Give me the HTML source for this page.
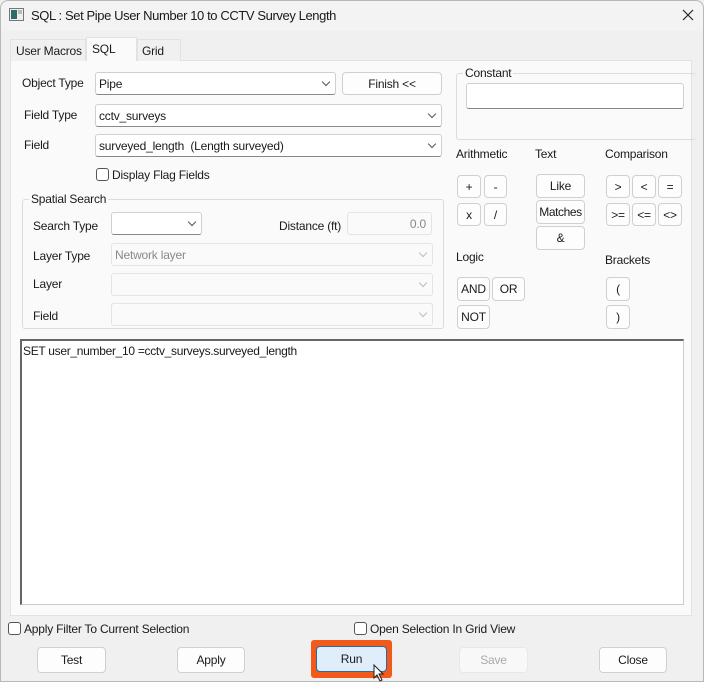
<!DOCTYPE html>
<html><head><meta charset="utf-8"><style>
*{box-sizing:border-box;margin:0;padding:0}
body{width:704px;height:682px;background:#f0f0f0;font-family:"Liberation Sans",sans-serif;font-size:12px;letter-spacing:-0.2px;color:#1a1a1a;position:relative;overflow:hidden;white-space:nowrap}
.a{position:absolute}
.win{left:0;top:0;width:704px;height:682px;border:1px solid #b8b8b8;border-radius:8px 8px 0 0;background:#f0f0f0}
.tb{left:1px;top:1px;width:702px;height:30px;background:#f3f3f3;border-radius:8px 8px 0 0}
.panel{left:10px;top:60px;width:682px;height:556px;background:#fafafa;border:1px solid #e2e2e2}
.tab{height:22px;border:1px solid #e2e2e2;border-bottom:none;background:#f0f0f0;padding:4px 5px;font-size:12px}
.lbl{font-size:12px}
.cb{background:#fff;border:1px solid #d0d0d0;border-bottom:1px solid #888;border-radius:3px;padding:4px 3px;font-size:12px}
.cb.dis{background:#fafafa;border:1px solid #e4e4e4;color:#888}
.chev{position:absolute;right:6px;top:6px;width:6px;height:6px;border-right:1px solid #555;border-bottom:1px solid #555;transform:rotate(45deg)}
.dis .chev{border-color:#bbb}
.btn{background:#fdfdfd;border:1px solid #d0d0d0;border-radius:4px;text-align:center;font-size:12px;display:flex;align-items:center;justify-content:center}
.grp{border:1px solid #dcdcdc;border-radius:3px}
.gt{background:#fafafa;padding:0 2px;font-size:12px}
.chk{width:13px;height:13px;border:1px solid #555;border-radius:3px;background:#fff}
</style></head><body>
<div class="a win"></div>
<div class="a tb"></div>
<svg class="a" style="left:9px;top:8px" width="15" height="13"><rect x="0.5" y="0.5" width="14" height="12" fill="#eee" stroke="#777"/><rect x="2" y="2" width="6" height="9" fill="#2e6b6b"/><rect x="9" y="2" width="4" height="4" fill="#bbb"/></svg>
<div class="a" style="left:31px;top:8px;font-size:13px;letter-spacing:-0.4px">SQL : Set Pipe User Number 10 to CCTV Survey Length</div>
<svg class="a" style="left:682px;top:9px" width="12" height="12"><path d="M1 1L11 11M11 1L1 11" stroke="#222" stroke-width="1.2"/></svg>

<div class="a panel"></div>
<div class="a tab" style="left:10px;top:39px;width:76px">User Macros</div>
<div class="a tab" style="left:137px;top:39px;width:44px;padding-left:4px">Grid</div>
<div class="a tab" style="left:86px;top:37px;width:51px;height:24px;background:#fafafa;padding-top:4px">SQL</div>

<div class="a lbl" style="left:22px;top:76px">Object Type</div>
<div class="a cb" style="left:95px;top:72px;width:241px;height:23px">Pipe<span class="chev"></span></div>
<div class="a btn" style="left:342px;top:72px;width:100px;height:23px">Finish &lt;&lt;</div>
<div class="a lbl" style="left:24px;top:108px">Field Type</div>
<div class="a cb" style="left:95px;top:104px;width:347px;height:23px">cctv_surveys<span class="chev"></span></div>
<div class="a lbl" style="left:24px;top:138px">Field</div>
<div class="a cb" style="left:95px;top:134px;width:347px;height:23px">surveyed_length&nbsp; (Length surveyed)<span class="chev"></span></div>
<div class="a chk" style="left:96px;top:168px"></div>
<div class="a lbl" style="left:112px;top:168px">Display Flag Fields</div>

<div class="a grp" style="left:22px;top:199px;width:422px;height:130px"></div>
<div class="a gt" style="left:29px;top:192px">Spatial Search</div>
<div class="a lbl" style="left:33px;top:219px">Search Type</div>
<div class="a cb" style="left:111px;top:212px;width:91px;height:23px"><span class="chev"></span></div>
<div class="a lbl" style="left:279px;top:219px">Distance (ft)</div>
<div class="a cb dis" style="left:347px;top:212px;width:85px;height:23px;text-align:right;padding-right:5px">0.0</div>
<div class="a lbl" style="left:33px;top:249px">Layer Type</div>
<div class="a cb dis" style="left:111px;top:243px;width:322px;height:23px">Network layer<span class="chev"></span></div>
<div class="a lbl" style="left:33px;top:277px">Layer</div>
<div class="a cb dis" style="left:111px;top:273px;width:322px;height:23px"><span class="chev"></span></div>
<div class="a lbl" style="left:33px;top:309px">Field</div>
<div class="a cb dis" style="left:111px;top:303px;width:322px;height:23px"><span class="chev"></span></div>

<div class="a grp" style="left:456px;top:73px;width:240px;height:67px;border-right:none"></div>
<div class="a gt" style="left:463px;top:66px">Constant</div>
<div class="a cb" style="left:466px;top:83px;width:218px;height:26px"></div>

<div class="a lbl" style="left:456px;top:147px">Arithmetic</div>
<div class="a lbl" style="left:535px;top:147px">Text</div>
<div class="a lbl" style="left:605px;top:147px">Comparison</div>
<div class="a btn" style="left:457px;top:175px;width:24px;height:23px">+</div>
<div class="a btn" style="left:484px;top:175px;width:23px;height:23px">-</div>
<div class="a btn" style="left:457px;top:203px;width:24px;height:23px">x</div>
<div class="a btn" style="left:484px;top:203px;width:23px;height:23px">/</div>
<div class="a btn" style="left:536px;top:174px;width:49px;height:24px">Like</div>
<div class="a btn" style="left:536px;top:200px;width:49px;height:24px;letter-spacing:-0.4px">Matches</div>
<div class="a btn" style="left:536px;top:226px;width:49px;height:24px">&amp;</div>
<div class="a btn" style="left:606px;top:175px;width:24px;height:23px">&gt;</div>
<div class="a btn" style="left:632px;top:175px;width:24px;height:23px">&lt;</div>
<div class="a btn" style="left:658px;top:175px;width:24px;height:23px">=</div>
<div class="a btn" style="left:606px;top:203px;width:24px;height:23px">&gt;=</div>
<div class="a btn" style="left:632px;top:203px;width:24px;height:23px">&lt;=</div>
<div class="a btn" style="left:658px;top:203px;width:24px;height:23px">&lt;&gt;</div>
<div class="a lbl" style="left:456px;top:250px">Logic</div>
<div class="a lbl" style="left:605px;top:253px">Brackets</div>
<div class="a btn" style="left:457px;top:277px;width:33px;height:24px">AND</div>
<div class="a btn" style="left:492px;top:277px;width:33px;height:24px">OR</div>
<div class="a btn" style="left:457px;top:305px;width:33px;height:24px">NOT</div>
<div class="a btn" style="left:606px;top:277px;width:24px;height:24px">(</div>
<div class="a btn" style="left:606px;top:305px;width:24px;height:24px">)</div>

<div class="a" style="left:20px;top:339px;width:664px;height:266px;background:#fff;border:1px solid #ccc;border-top:2px solid #666;border-left:2px solid #666;padding:3px 1px;font-size:12px;letter-spacing:-0.3px">SET user_number_10 =cctv_surveys.surveyed_length</div>

<div class="a chk" style="left:8px;top:622px"></div>
<div class="a lbl" style="left:24px;top:622px">Apply Filter To Current Selection</div>
<div class="a chk" style="left:354px;top:622px"></div>
<div class="a lbl" style="left:370px;top:622px">Open Selection In Grid View</div>

<div class="a btn" style="left:37px;top:647px;width:69px;height:26px">Test</div>
<div class="a btn" style="left:177px;top:647px;width:68px;height:26px">Apply</div>
<div class="a" style="left:311px;top:640px;width:81px;height:38px;background:#f25a1c;border-radius:3px"></div>
<div class="a btn" style="left:316px;top:646px;width:71px;height:26px;background:#e0eefc;border:1px solid #2a6aa8">Run</div>
<svg class="a" style="left:373px;top:664px" width="12" height="18"><path d="M1 1L1 14L4 11L7 17L9 16L6 10L10 10Z" fill="#fff" stroke="#222" stroke-width="1"/></svg>
<div class="a btn" style="left:459px;top:647px;width:69px;height:26px;color:#aaa;border-color:#e8e8e8;background:#f8f8f8">Save</div>
<div class="a btn" style="left:599px;top:647px;width:68px;height:26px">Close</div>
</body></html>
